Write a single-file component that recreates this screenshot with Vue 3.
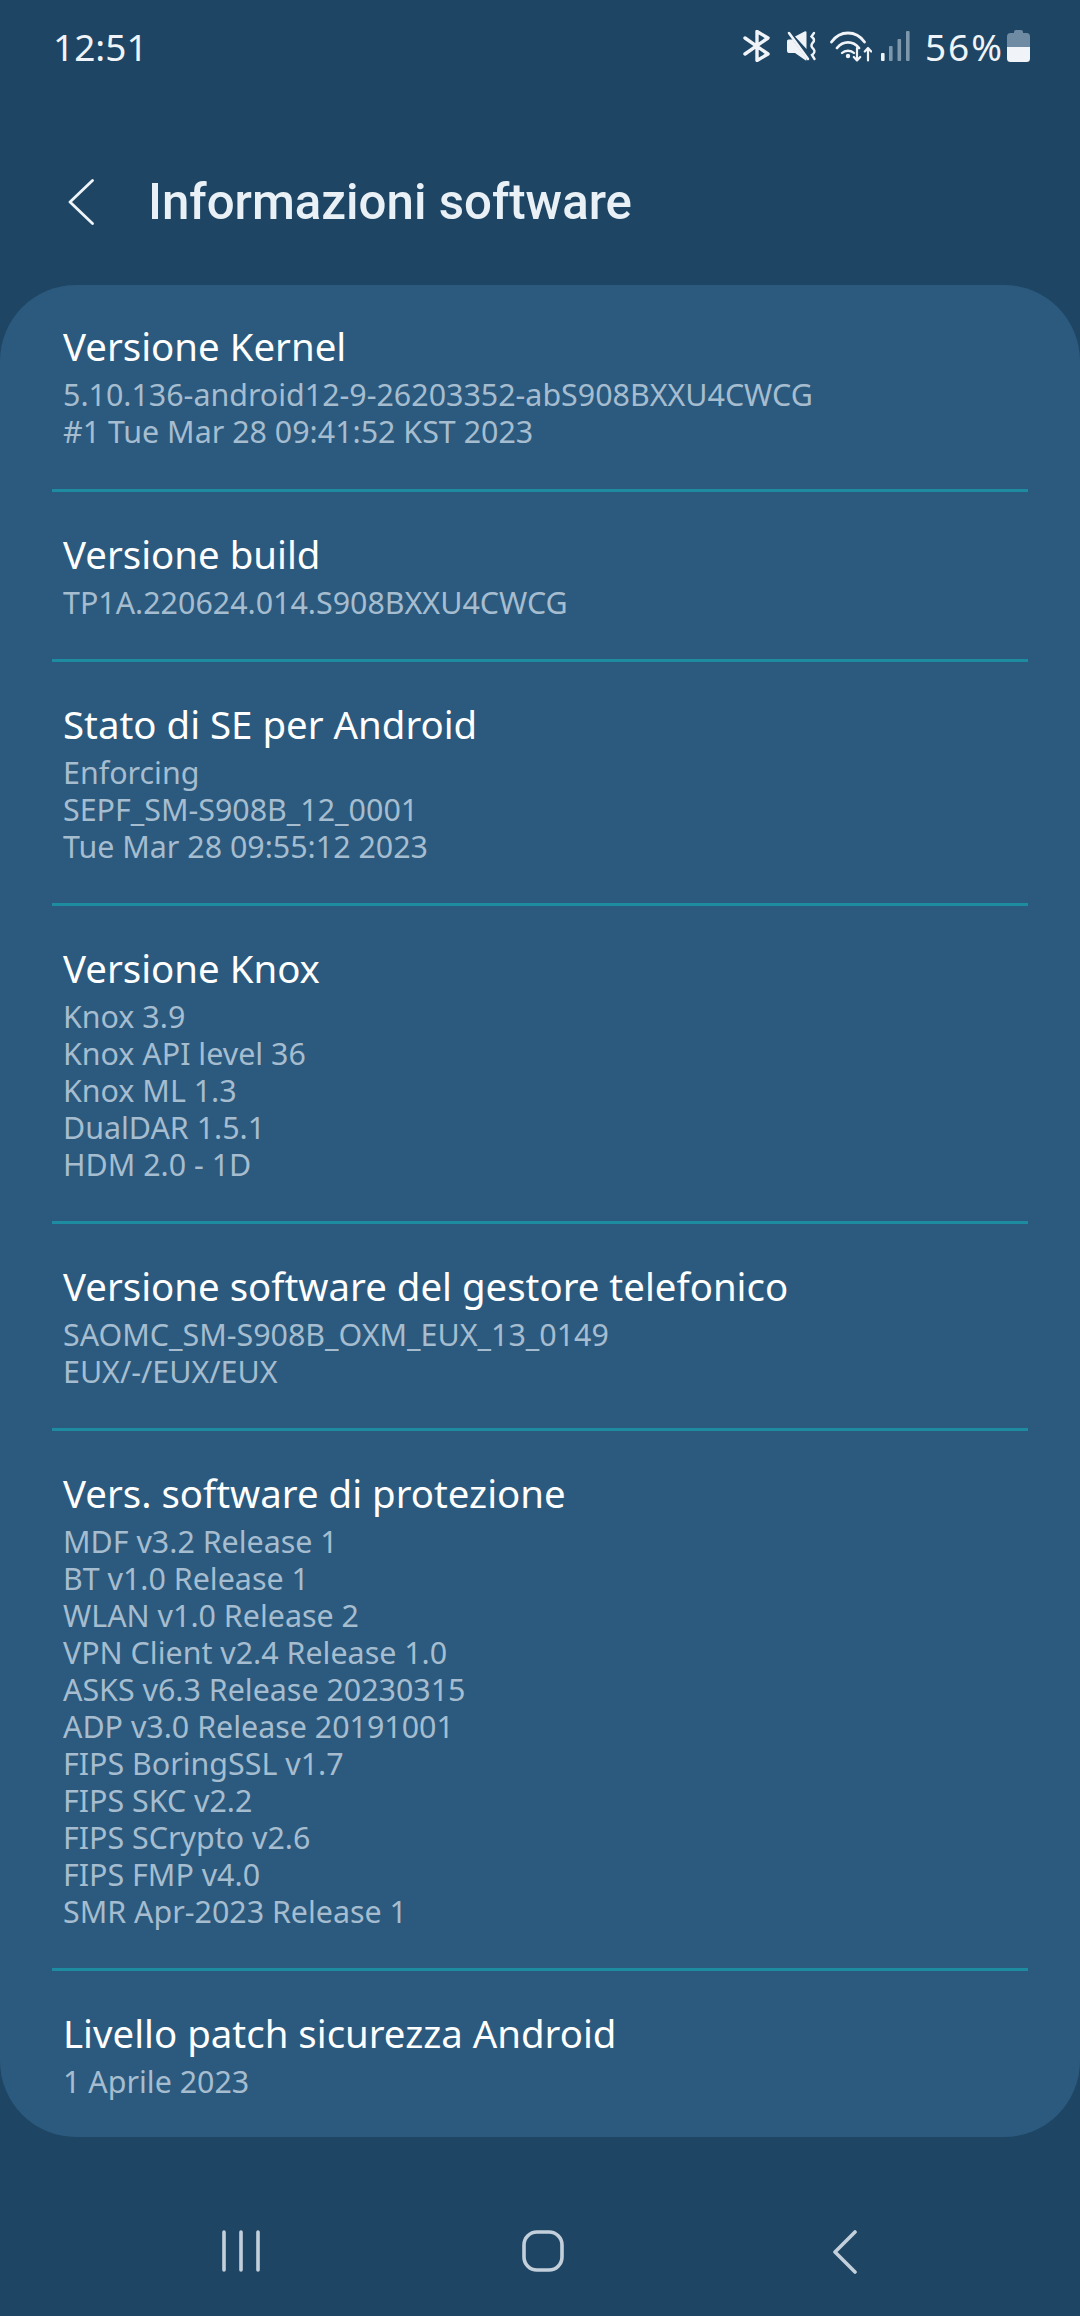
<script setup>
const rows = [
  { title: 'Versione Kernel', lines: ['5.10.136-android12-9-26203352-abS908BXXU4CWCG', '#1 Tue Mar 28 09:41:52 KST 2023'] },
  { title: 'Versione build', lines: ['TP1A.220624.014.S908BXXU4CWCG'] },
  { title: 'Stato di SE per Android', lines: ['Enforcing', 'SEPF_SM-S908B_12_0001', 'Tue Mar 28 09:55:12 2023'] },
  { title: 'Versione Knox', lines: ['Knox 3.9', 'Knox API level 36', 'Knox ML 1.3', 'DualDAR 1.5.1', 'HDM 2.0 - 1D'] },
  { title: 'Versione software del gestore telefonico', lines: ['SAOMC_SM-S908B_OXM_EUX_13_0149', 'EUX/-/EUX/EUX'] },
  { title: 'Vers. software di protezione', lines: ['MDF v3.2 Release 1', 'BT v1.0 Release 1', 'WLAN v1.0 Release 2', 'VPN Client v2.4 Release 1.0', 'ASKS v6.3 Release 20230315', 'ADP v3.0 Release 20191001', 'FIPS BoringSSL v1.7', 'FIPS SKC v2.2', 'FIPS SCrypto v2.6', 'FIPS FMP v4.0', 'SMR Apr-2023 Release 1'] },
  { title: 'Livello patch sicurezza Android', lines: ['1 Aprile 2023'] },
]
</script>

<template>
  <div class="screen">
    <header class="status">
      <span class="time">12:51</span>
      <div class="icons">
        <svg class="i-bt" viewBox="0 0 28 32" fill="none" stroke="#f0f4f8" stroke-width="3.4" stroke-linejoin="round" stroke-linecap="round">
          <path d="M2 8 L25 24 L14 30.500 V1.500 L25 8 L2 24" />
        </svg>
        <svg class="i-mute" viewBox="0 0 31 30" fill="none">
          <path d="M0 10 Q0 8.500 1.500 8.500 H5.500 L19.500 27.500 V29 Q19.500 30 18.400 29.300 L8 22 H2 Q0 22 0 20 Z M8 5.500 L17.500 0.500 Q19.500 -0.300 19.500 1.600 V18 Z" fill="#f0f4f8" />
          <path d="M2 2 L21 28" stroke="#f0f4f8" stroke-width="2.600" stroke-linecap="round" />
          <path d="M27 2 L24.500 5.500 Q29 9 25.500 12 Q23 15 26.500 18 Q29 21 25 24 L27.500 28" stroke="#f0f4f8" stroke-width="2.400" stroke-linecap="round" />
        </svg>
        <svg class="i-wifi" viewBox="0 0 42 31" fill="none" stroke="#f0f4f8" stroke-linecap="round" stroke-linejoin="round">
          <path d="M1.500 11 C10 -1 26 -1 34.500 11" stroke-width="2.800" />
          <path d="M7 17 C13 9.500 23 9.500 29 17" stroke-width="2.800" />
          <path d="M12 22 C15 19 21 19 24 22" stroke-width="2.400" />
          <circle cx="18" cy="25" r="2.200" fill="#f0f4f8" stroke="none" />
          <path d="M27 17 V29.500 M23.800 26 L27 29.500 L30.200 26" stroke-width="2.200" />
          <path d="M38 29.500 V17 M34.800 20.500 L38 17 L41.200 20.500" stroke-width="2.200" />
        </svg>
        <svg class="i-signal" viewBox="0 0 29 30">
          <rect x="0" y="22" width="3.600" height="8" rx="1" fill="#f0f4f8" />
          <rect x="8" y="15" width="3.600" height="15" rx="1" fill="#7d98ad" />
          <rect x="16.500" y="8" width="3.600" height="22" rx="1" fill="#7d98ad" />
          <rect x="25" y="0" width="3.600" height="30" rx="1" fill="#7d98ad" />
        </svg>
        <span class="pct">56%</span>
        <svg class="i-batt" viewBox="0 0 23 32">
          <path d="M7 2 Q7 0 9 0 H14 Q16 0 16 2 V3 H19.500 Q23 3 23 6.500 V17 H0 V6.500 Q0 3 3.500 3 H7 Z" fill="#6f8ba3" />
          <path d="M0 17 H23 V28.500 Q23 32 19.500 32 H3.500 Q0 32 0 28.500 Z" fill="#f0f4f8" />
        </svg>
      </div>
    </header>

    <div class="appbar">
      <svg class="back" viewBox="0 0 26 46" fill="none" stroke="#eef4f8" stroke-width="2.800" stroke-linecap="round" stroke-linejoin="round">
        <path d="M24.500 1.500 L2 23 L24.500 44.500" />
      </svg>
      <h1>Informazioni software</h1>
    </div>

    <main class="card">
      <section v-for="row in rows" :key="row.title" class="row">
        <h2>{{ row.title }}</h2>
        <p v-for="line in row.lines" :key="line">{{ line }}</p>
      </section>
    </main>

    <nav class="nav">
      <svg class="n-recent" viewBox="0 0 38 42" fill="none" stroke="#c3d0db" stroke-width="3.600" stroke-linecap="round">
        <path d="M2 2 V40 M19 2 V40 M36 2 V40" />
      </svg>
      <svg class="n-home" viewBox="0 0 42 42" fill="none" stroke="#c3d0db" stroke-width="3.600">
        <rect x="2" y="2" width="38" height="38" rx="13" />
      </svg>
      <svg class="n-back" viewBox="0 0 24 44" fill="none" stroke="#c3d0db" stroke-width="3.600" stroke-linecap="round" stroke-linejoin="round">
        <path d="M22 2 L2 22 L22 42" />
      </svg>
    </nav>
  </div>
</template>

<style>
html, body { margin: 0; background: #1e4563; }
</style>

<style scoped>
.screen {
  width: 1080px;
  height: 2316px;
  background: #1e4563;
  font-family: "Noto Sans", sans-serif;
  display: flex;
  flex-direction: column;
  overflow: hidden;
}
.status {
  height: 64px;
  margin-top: 14px;
  margin-bottom: 2px;
  padding: 0 50px 0 53px;
  display: flex;
  align-items: center;
  justify-content: space-between;
  color: #f0f4f8;
}
.time { font-size: 37px; }
.icons { display: flex; align-items: center; }
.i-bt { width: 28px; height: 32px; }
.i-mute { width: 31px; height: 30px; margin-left: 16px; }
.i-wifi { width: 42px; height: 31px; margin-left: 12px; }
.i-signal { width: 29px; height: 30px; margin-left: 9px; }
.pct { font-size: 37px; letter-spacing: 2px; margin-left: 15px; }
.i-batt { width: 23px; height: 32px; margin-left: 3px; }
.appbar {
  height: 205px;
  padding: 39px 0 0 68px;
  box-sizing: border-box;
  display: flex;
  align-items: center;
  gap: 54px;
}
.back { width: 26px; height: 46px; }
h1 {
  margin: 0;
  font-family: Roboto, "Noto Sans", sans-serif;
  font-size: 49.200px;
  font-weight: 500;
  color: #e9f1f6;
}
.card {
  background: #2b5a7e;
  border-radius: 76px;
  height: 1852px;
  box-sizing: border-box;
}
.row {
  margin: 0 52px;
  padding: 37px 11px 38px;
  border-bottom: 3px solid #1d8ba0;
}
.row:first-child { padding-top: 36px; padding-bottom: 39px; }
.row:last-child { border-bottom: none; padding-bottom: 0; }
h2 {
  margin: 0 0 5px;
  font-size: 38.400px;
  font-weight: 400;
  line-height: 50px;
  color: #fff;
}
p {
  margin: 0;
  font-size: 30.400px;
  line-height: 37px;
  color: #a6bdd0;
}
.nav { flex: 1; position: relative; }
.nav svg { position: absolute; }
.n-recent { left: 222px; top: 93px; width: 38px; height: 42px; }
.n-home { left: 522px; top: 93px; width: 42px; height: 42px; }
.n-back { left: 833px; top: 93px; width: 24px; height: 44px; }
</style>
